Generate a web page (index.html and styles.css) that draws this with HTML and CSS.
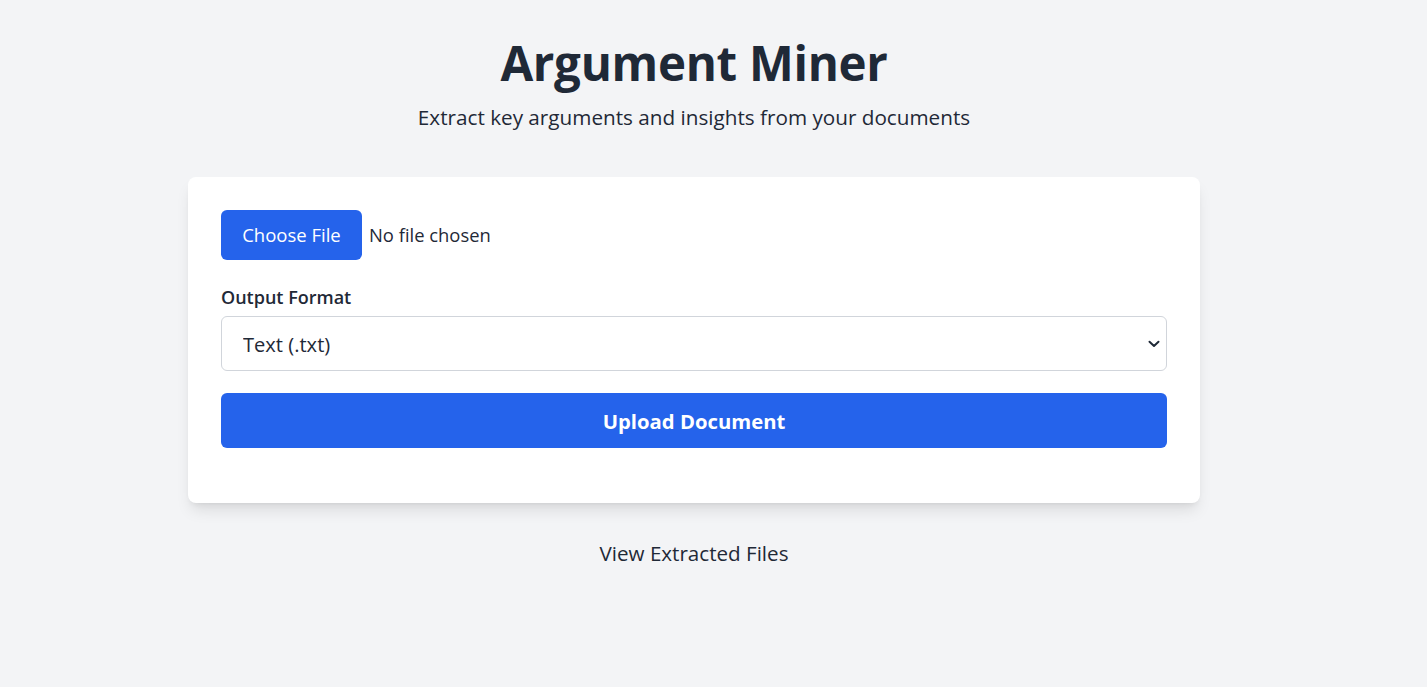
FILE: index.html
```html
<!DOCTYPE html>
<html lang="en">
<head>
<meta charset="utf-8">
<title>Argument Miner</title>
<link rel="stylesheet" href="styles.css">
</head>
<body>
<main class="page">
  <header class="hero">
    <h1 class="title">Argument Miner</h1>
    <p class="subtitle">Extract key arguments and insights from your documents</p>
  </header>
  <section class="card">
    <form class="form">
      <div class="file-row">
        <label class="file-btn" for="file">Choose File</label>
        <input id="file" class="file-input" type="file">
        <span class="file-name">No file chosen</span>
      </div>
      <label class="field-label" for="fmt">Output Format</label>
      <div class="select-wrap">
        <select id="fmt" class="select">
          <option>Text (.txt)</option>
          <option>JSON (.json)</option>
        </select>
        <svg class="chevron" width="12" height="8" viewBox="0 0 12 8" aria-hidden="true"><path d="M1.5 1.8 L6 6 L10.5 1.8" fill="none" stroke="#1f2937" stroke-width="2" stroke-linecap="round" stroke-linejoin="round"/></svg>
      </div>
      <button type="button" class="upload">Upload Document</button>
    </form>
  </section>
  <a class="view-link" href="#">View Extracted Files</a>
</main>
</body>
</html>
```
FILE: styles.css
```css
* { box-sizing: border-box; }
html, body { margin: 0; padding: 0; }
body {
  background: #f3f4f6;
  color: #1f2937;
  font-family: "Open Sans", "Noto Sans", "Liberation Sans", sans-serif;
}
.page {
  width: 1388px;
  display: flex;
  flex-direction: column;
  align-items: center;
  padding-top: 31px;
}
.hero { text-align: center; }
.title {
  margin: 0;
  font-size: 47.5px;
  font-weight: 700;
  line-height: 64px;
  letter-spacing: -0.3px;
}
.subtitle {
  margin: 9px 0 0;
  font-size: 20.7px;
  line-height: 26px;
}
.card {
  margin-top: 47px;
  width: 1012px;
  background: #fff;
  border-radius: 8px;
  box-shadow: 0 10px 15px -3px rgba(0,0,0,.1), 0 4px 6px -4px rgba(0,0,0,.1);
  padding: 33px 33px 55px;
}
.form { display: flex; flex-direction: column; }
.file-row { display: flex; align-items: center; gap: 7px; }
.file-input { display: none; }
.file-btn {
  height: 50px;
  width: 141px;
  display: flex;
  align-items: center;
  justify-content: center;
  padding-bottom: 2px;
  background: #2563eb;
  color: #fff;
  border-radius: 6px;
  font-size: 18.5px;
}
.file-name { font-size: 18.4px; padding-bottom: 2px; }
.field-label {
  margin-top: 26px;
  font-size: 18px;
  font-weight: 600;
  line-height: 22px;
}
.select-wrap { position: relative; margin-top: 8px; }
.select {
  appearance: none;
  -webkit-appearance: none;
  width: 100%;
  height: 55px;
  border: 1px solid #d1d5db;
  border-radius: 6px;
  background: #fff;
  color: #1f2937;
  font-family: inherit;
  font-size: 20.1px;
  padding: 2px 21px 0;
  outline: none;
}
.chevron {
  position: absolute;
  right: 7px;
  top: 24px;
  pointer-events: none;
}
.upload {
  margin-top: 22px;
  height: 55px;
  border: 0;
  border-radius: 6px;
  background: #2563eb;
  color: #fff;
  font-family: inherit;
  font-size: 20.3px;
  font-weight: 700;
  cursor: pointer;
}
.view-link {
  margin-top: 36px;
  font-size: 20.6px;
  line-height: 28px;
  color: #1f2937;
  text-decoration: none;
}
```
